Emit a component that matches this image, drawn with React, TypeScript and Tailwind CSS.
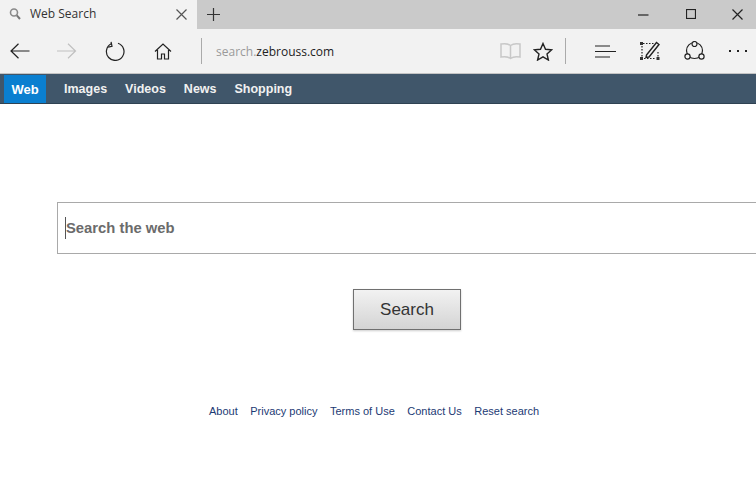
import {JSX} from 'react';

const navItems = ['Images', 'Videos', 'News', 'Shopping'];
const footerLinks = ['About', 'Privacy policy', 'Terms of Use', 'Contact Us', 'Reset search'];

function Icon({w, h, children}: {w: number; h: number; children: React.ReactNode}): JSX.Element {
  return (
    <svg width={w} height={h} viewBox={`0 0 ${w} ${h}`} fill="none" stroke="currentColor" strokeWidth="1.2" className="block shrink-0">
      {children}
    </svg>
  );
}

function TabBar(): JSX.Element {
  return (
    <div className="flex h-[29px] items-stretch bg-[#cacaca] text-[#222]">
      <div className="flex w-[197px] items-center bg-[#f2f2f2] pb-px pl-[9px] pr-[10px]">
        <Icon w={12} h={14}>
          <circle cx="5" cy="5.500" r="3.500" stroke="#8a8a8a" strokeWidth="1.600" />
          <path d="M7.800 8.300 11 12" stroke="#777" strokeWidth="2" />
        </Icon>
        <span className="ml-[9px] flex-1 text-[12px] text-[#333]">Web Search</span>
        <Icon w={11} h={11}>
          <path d="M.5.5l10 10M10.500.5l-10 10" stroke="#555" />
        </Icon>
      </div>
      <div className="ml-[10px] flex items-center pb-px">
        <Icon w={13} h={13}>
          <path d="M6.500 0v13M0 6.500h13" stroke="#333" />
        </Icon>
      </div>
      <div className="ml-auto flex items-center pb-px">
        <div className="mr-[37px]">
          <Icon w={11} h={11}>
            <path d="M0 6h10.500" stroke="#222" />
          </Icon>
        </div>
        <div className="mr-[36px]">
          <Icon w={10} h={10}>
            <rect x=".5" y=".5" width="9" height="9" stroke="#222" />
          </Icon>
        </div>
        <div className="mr-[13px]">
          <Icon w={11} h={11}>
            <path d="M.5.5l10 10M10.500.5l-10 10" stroke="#222" />
          </Icon>
        </div>
      </div>
    </div>
  );
}

function Toolbar(): JSX.Element {
  return (
    <div className="flex h-[45px] items-center border-b border-[#c4c4c4] bg-[#f2f2f2] text-[#222]">
      <div className="ml-[10px]">
        <Icon w={20} h={16}>
          <path d="M19.500 8H1M8.500.8 1 8l7.500 7.200" />
        </Icon>
      </div>
      <div className="ml-[27px] text-[#c0c0c0]">
        <Icon w={20} h={16}>
          <path d="M0 8h18.500M11 .8 18.500 8 11 15.200" />
        </Icon>
      </div>
      <div className="ml-[28px]">
        <Icon w={20} h={20}>
          <path d="M6.200 2.800A8.800 8.800 0 1 0 13 2.300" />
          <path d="M6.500 1v4.500H2.500" transform="rotate(-12 6 3)" />
        </Icon>
      </div>
      <div className="ml-[29px]">
        <Icon w={18} h={17}>
          <path d="M1 8.500 9 1l8 7.500M3.500 7v9h4v-5h3v5h4V7" />
        </Icon>
      </div>
      <div className="ml-[29px] h-[26px] w-px bg-[#aaa]" />
      <div className="ml-[14px] flex-1 pt-px text-[12px] text-[#222]">
        <span className="text-[#9a9a9a]">search.</span>zebrouss.com
      </div>
      <div className="text-[#c8c8c8]">
        <Icon w={21} h={18}>
          <path d="M10.500 3.500C8 1.500 4 1.500 1 2v13c3-.5 7-.5 9.500 1.500C13 14.500 17 14.500 20 15V2c-3-.5-7-.5-9.500 1.500ZM10.500 3.500v13" strokeWidth="1.500" />
        </Icon>
      </div>
      <div className="ml-[12px]">
        <Icon w={20} h={19}>
          <path d="M10 1.500l2.500 5.800 6.200.5-4.700 4.100 1.400 6.100L10 14.800l-5.400 3.200L6 11.900 1.300 7.800l6.200-.5Z" strokeWidth="1.400" />
        </Icon>
      </div>
      <div className="ml-[12px] h-[26px] w-px bg-[#aaa]" />
      <div className="ml-[29px]">
        <Icon w={21} h={15}>
          <path d="M0 2h15M0 7.500h21M0 13h15" />
        </Icon>
      </div>
      <div className="ml-[24px]">
        <Icon w={20} h={20}>
          <path d="M3 2.500h11M2 5v11M4 17.500h12M18 11v5" strokeDasharray="1.500 1.500" />
          <path d="M6.500 14l10-12.500 2.500 2L9 16l-3 .5Z" strokeWidth="1.400" />
          <rect x="0" y="1" width="3" height="3" fill="#333" stroke="none" />
          <rect x="0" y="16" width="3" height="3" fill="#333" stroke="none" />
          <rect x="16.500" y="16" width="3" height="3" fill="#333" stroke="none" />
        </Icon>
      </div>
      <div className="ml-[24px]">
        <Icon w={21} h={20}>
          <circle cx="10.500" cy="9.500" r="8" />
          <circle cx="10.500" cy="3" r="2.500" fill="#f2f2f2" />
          <circle cx="3.500" cy="15.500" r="2.600" fill="#f2f2f2" />
          <circle cx="17.500" cy="15.500" r="2.600" fill="#f2f2f2" />
        </Icon>
      </div>
      <div className="ml-[24px] mr-[9px] flex gap-[6px]">
        <span className="size-[2px] bg-[#222]" />
        <span className="size-[2px] bg-[#222]" />
        <span className="size-[2px] bg-[#222]" />
      </div>
    </div>
  );
}

function SiteNav(): JSX.Element {
  return (
    <nav className="flex h-[30px] items-center gap-[18px] border-b border-[#2f4252] bg-[#40566a] pl-1 text-[12.500px] font-bold text-white [font-family:'Liberation_Sans',Arial,sans-serif]">
      <a className="flex h-[28px] w-[42px] items-center justify-center self-end bg-[#0a7fd0] pt-px text-[13px]">Web</a>
      {navItems.map(item => (
        <a className="pt-[2px] text-[#f1f1f1]" key={item}>
          {item}
        </a>
      ))}
    </nav>
  );
}

export default function App(): JSX.Element {
  return (
    <div className="h-[483px] w-[756px] overflow-hidden bg-white font-['Open_Sans','Noto_Sans',sans-serif]">
      <TabBar />
      <Toolbar />
      <SiteNav />
      <main className="[font-family:'Liberation_Sans',Arial,sans-serif]">
        <div className="ml-[57px] mt-[98px] flex h-[52px] w-[720px] items-center border border-[#a9a9a9] pl-[7px]">
          <span className="border-l border-[#555] text-[14.800px] font-bold text-[#6b6b6b]">Search the web</span>
        </div>
        <div className="ml-[353px] mt-[35px]">
          <button className="h-[41px] w-[108px] border border-[#707070] bg-linear-to-b from-[#f2f2f2] to-[#d4d4d4] text-[17px] text-[#333] shadow-[0_1px_2px_rgba(0,0,0,0.2)]">
            Search
          </button>
        </div>
        <footer className="ml-[209px] mt-[73px] flex gap-[12.500px] text-[11px] text-[#1c3a74]">
          {footerLinks.map(link => (
            <a key={link}>{link}</a>
          ))}
        </footer>
      </main>
    </div>
  );
}
